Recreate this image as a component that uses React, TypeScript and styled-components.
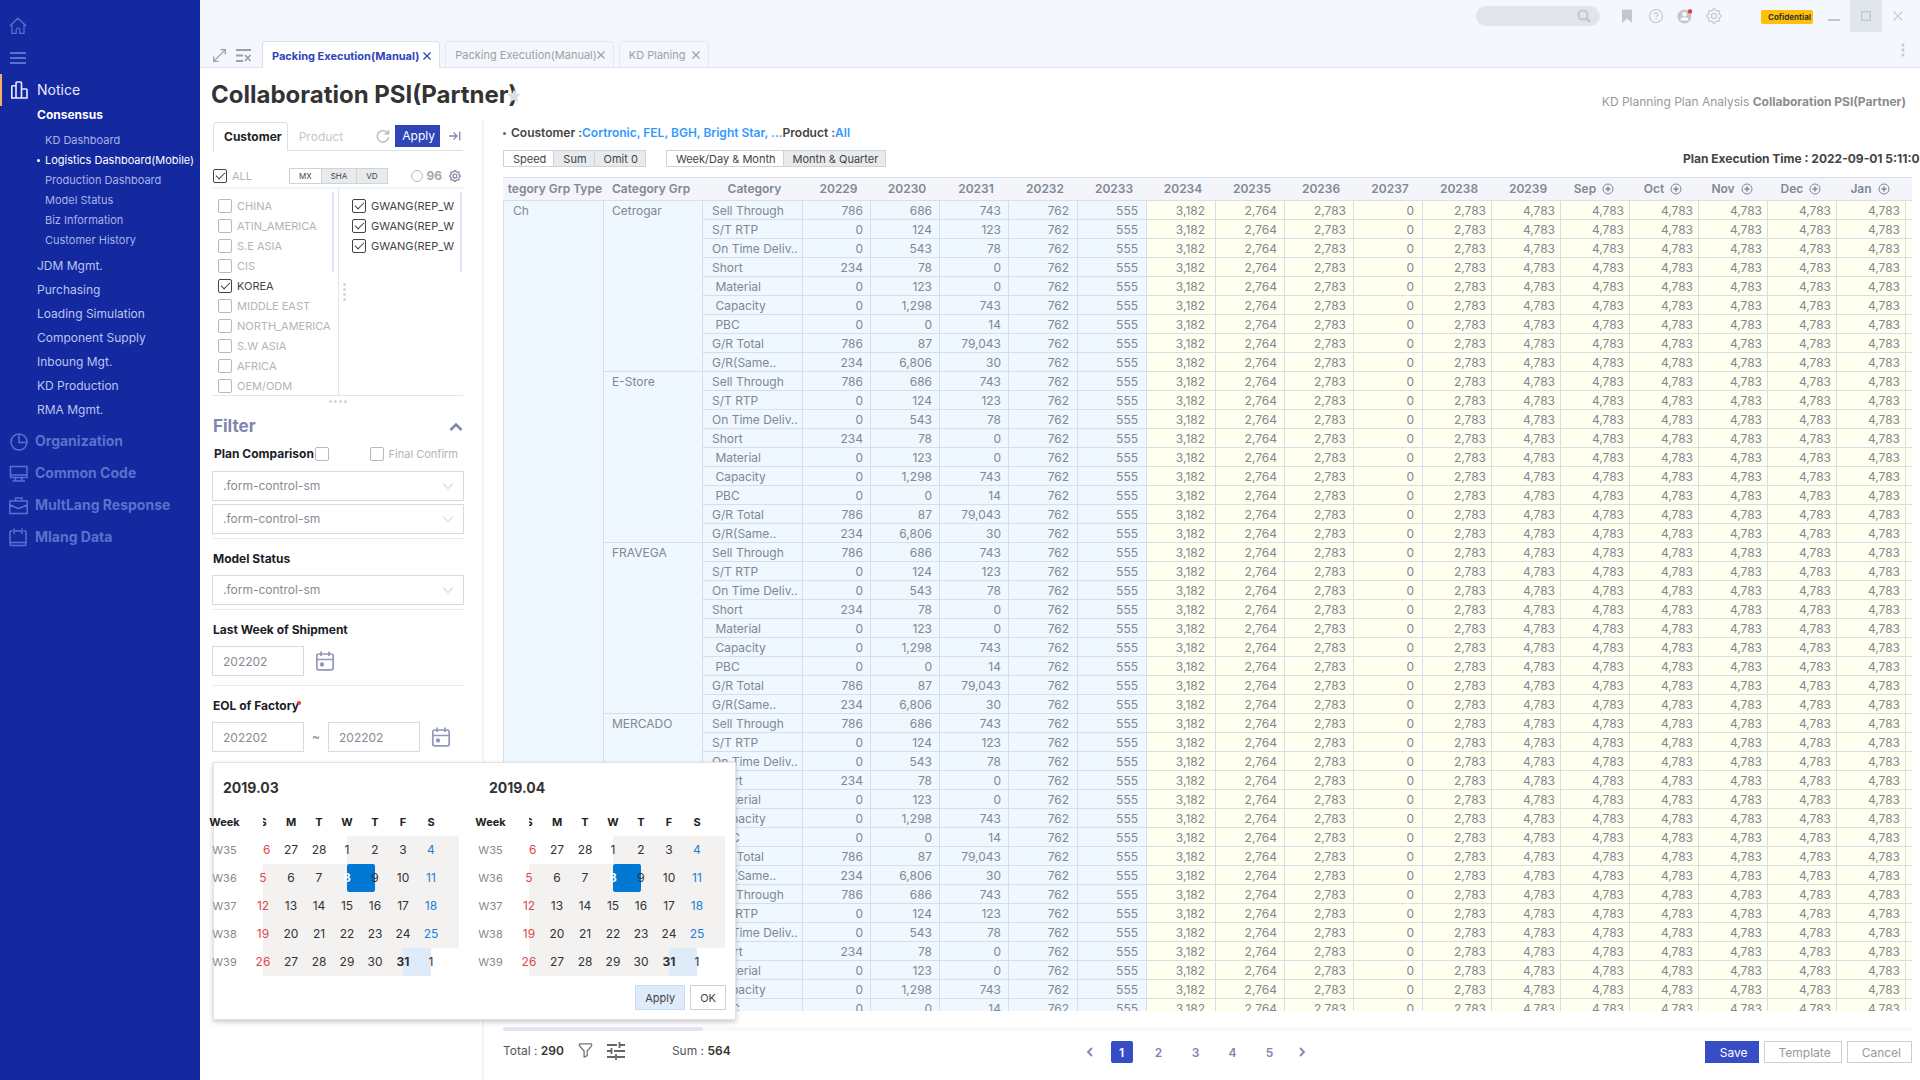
import React from "react";
import styled, { createGlobalStyle, css } from "styled-components";

const GlobalStyle = createGlobalStyle`
  *, *::before, *::after { box-sizing: border-box; }
  html, body { margin: 0; background: #fff; }
  body, button, input, select, table {
    font-family: Inter, "Liberation Sans", sans-serif;
    font-size: 12px;
    line-height: 16px;
  }
  button { cursor: pointer; }
  ul { list-style: none; margin: 0; padding: 0; }
`;

const Shell = styled.div`
  display: grid;
  grid-template-columns: 200px minmax(0, 1fr);
  height: 100vh;
  overflow: hidden;
  color: #333;
`;

/* ---------- side navigation ---------- */

const Sidebar = styled.nav`
  background: #1428a0;
  padding-top: 10px;
`;

const NavIconButton = styled.button`
  display: flex;
  align-items: center;
  width: 100%;
  height: 32px;
  padding: 0 0 0 9px;
  border: 0;
  background: none;
  color: #5a72cd;
`;

const ActiveSection = styled.a`
  display: flex;
  align-items: center;
  gap: 9px;
  height: 32px;
  padding-left: 8px;
  border-left: 2px solid #f0b267;
  color: #e6ebff;
  font-size: 14px;
  text-decoration: none;
`;

const GroupLink = styled.a`
  display: block;
  padding: 1px 0 1px 37px;
  color: #fff;
  font-weight: 700;
  text-decoration: none;
`;

const SubList = styled.ul`
  padding: 6px 0 4px;
`;

const SubLink = styled.a<{ $active?: boolean }>`
  display: flex;
  align-items: center;
  height: 20px;
  padding-left: 37px;
  font-size: 11px;
  text-decoration: none;
  white-space: nowrap;
  color: ${(p) => (p.$active ? "#fff" : "#a6b4e6")};
  &::before {
    content: "";
    width: 3px;
    height: 3px;
    margin-right: 5px;
    border-radius: 50%;
    background: ${(p) => (p.$active ? "#fff" : "transparent")};
  }
`;

const MenuLink = styled.a`
  display: flex;
  align-items: center;
  height: 24px;
  padding-left: 37px;
  color: #b9c5ee;
  text-decoration: none;
`;

const SectionList = styled.ul`
  padding-top: 3px;
`;

const SectionLink = styled.a`
  display: flex;
  align-items: center;
  gap: 7px;
  height: 32px;
  padding-left: 9px;
  color: #5a72cd;
  font-size: 14px;
  font-weight: 700;
  text-decoration: none;
`;

/* ---------- window header ---------- */

const Page = styled.div`
  position: relative;
  display: flex;
  flex-direction: column;
  min-width: 0;
  min-height: 0;
`;

const Header = styled.header`
  background: #f4f7fd;
`;

const TitleBar = styled.div`
  display: flex;
  align-items: center;
  justify-content: flex-end;
  height: 32px;
  color: #c2c8cd;
`;

const SearchBox = styled.label`
  display: flex;
  align-items: center;
  width: 124px;
  height: 20px;
  margin-right: 19px;
  padding: 0 9px 0 10px;
  border-radius: 10px;
  background: #e1e6ea;
`;

const SearchInput = styled.input`
  flex: 1;
  min-width: 0;
  border: 0;
  outline: 0;
  padding: 0;
  background: transparent;
`;

const Tools = styled.div`
  display: flex;
  align-items: center;
  gap: 13px;
`;

const PlainButton = styled.button`
  display: inline-flex;
  align-items: center;
  justify-content: center;
  padding: 0;
  border: 0;
  background: none;
  color: inherit;
`;

const Confidential = styled.span`
  margin: 1px 5px 0 39px;
  padding: 0 2px 0 7px;
  border-radius: 2px;
  background: #ffc107;
  color: #333;
  font-size: 8px;
  font-weight: 700;
  line-height: 14px;
`;

const WindowButton = styled.button<{ $active?: boolean }>`
  display: flex;
  align-items: center;
  justify-content: center;
  width: 32px;
  height: 32px;
  padding: 0;
  border: 0;
  background: ${(p) => (p.$active ? "#e1e6ea" : "transparent")};
  color: #c2c8cd;
`;

const WindowButtons = styled.div`
  display: flex;
  padding-right: 6px;
`;

const TabBar = styled.div`
  display: flex;
  align-items: flex-end;
  height: 36px;
  padding: 0 10px 0 12px;
  border-bottom: 1px solid #e1e4f0;
  color: #a0a0a0;
`;

const TabTools = styled.div`
  display: flex;
  align-items: center;
  gap: 8px;
  width: 50px;
  height: 26px;
  padding-top: 3px;
`;

const PageTabs = styled.div`
  display: flex;
  align-items: flex-end;
  flex: 1;
  gap: 5px;
`;

const PageTab = styled.div<{ $active?: boolean; $gap?: number }>`
  display: flex;
  align-items: center;
  gap: ${(p) => p.$gap ?? 4}px;
  height: 26px;
  padding: 1px 8px 0 9px;
  border: 1px solid #e4e7ef;
  border-bottom: 0;
  border-radius: 4px 4px 0 0;
  color: #a0a0a0;
  white-space: nowrap;
  ${(p) =>
    p.$active &&
    css`
      height: 27px;
      margin-bottom: -1px;
      background: #fff;
      border-color: #dcdfea;
      color: #2f45b8;
      font-weight: 700;
    `}
`;

const TabButton = styled.button`
  padding: 0;
  border: 0;
  background: none;
  color: inherit;
  font-size: 11px;
  font-weight: inherit;
`;

const MoreButton = styled(PlainButton)`
  align-self: center;
  color: #c2c8cd;
`;

const TitleRow = styled.div`
  display: flex;
  align-items: flex-start;
  justify-content: space-between;
  height: 52px;
  padding: 12px 14px 0 11px;
`;

const Title = styled.h1`
  position: relative;
  margin: 0;
  font-size: 24px;
  line-height: 30px;
  font-weight: 700;
  color: #333;
`;

const Favorite = styled.button`
  position: absolute;
  top: 9px;
  right: -3px;
  padding: 0;
  border: 0;
  background: none;
  line-height: 0;
`;

const Crumbs = styled.p`
  margin: 14px 0 0;
  color: #999;
  strong {
    font-weight: 700;
    color: #8c8c8c;
  }
`;

const Body = styled.div`
  display: flex;
  flex: 1;
  min-height: 0;
`;

/* ---------- filter panel ---------- */

const Panel = styled.aside`
  flex: none;
  width: 284px;
  padding: 2px 19px 0 13px;
  border-right: 2px solid #f3f4f7;
`;

const PanelTabs = styled.div`
  display: flex;
  height: 29px;
  border-bottom: 1px solid #dcdfea;
`;

const PanelTab = styled.button<{ $active?: boolean }>`
  padding: 0 5px 0 10px;
  border: 1px solid transparent;
  border-bottom: 0;
  border-radius: 4px 4px 0 0;
  background: transparent;
  color: #c2c8cd;
  ${(p) =>
    p.$active &&
    css`
      margin-bottom: -1px;
      border-color: #dcdfea;
      background: #fff;
      color: #222;
      font-weight: 700;
    `}
`;

const PanelActions = styled.div`
  display: flex;
  align-items: center;
  gap: 5px;
  margin-left: auto;
  padding-right: 2px;
  color: #8087ae;
`;

const ApplyButton = styled.button`
  height: 22px;
  margin-right: 4px;
  padding: 0 5px 0 7px;
  border: 0;
  background: #2f45b8;
  color: #fff;
`;

const AllRow = styled.div`
  display: flex;
  align-items: center;
  height: 38px;
  padding: 14px 2px 0 0;
  border-bottom: 2px solid #f2f3f5;
`;

const CheckLabel = styled.label<{ $dark?: boolean }>`
  display: flex;
  align-items: center;
  gap: 5px;
  height: 20px;
  font-size: 11px;
  white-space: nowrap;
  color: ${(p) => (p.$dark ? "#444" : "#b4b4b4")};
`;

const Check = styled.input.attrs({ type: "checkbox" })`
  appearance: none;
  flex: none;
  display: grid;
  place-items: center;
  width: 14px;
  height: 14px;
  margin: 0;
  border: 1px solid #b8b8b8;
  border-radius: 2px;
  background: #fff;
  &:checked {
    border-color: #444;
  }
  &:checked::after {
    content: "";
    width: 9px;
    height: 5px;
    margin-top: -3px;
    border: solid #444;
    border-width: 0 0 1px 1px;
    transform: rotate(-45deg);
  }
`;

const Segments = styled.div`
  display: flex;
`;

const OwnerSegments = styled(Segments)`
  margin-left: 37px;
`;

const Segment = styled.button<{ $active?: boolean; $small?: boolean }>`
  height: ${(p) => (p.$small ? 16 : 17)}px;
  padding: ${(p) => (p.$small ? "0 9px" : "0 7px 0 9px")};
  border: 1px solid #cfd3d8;
  background: ${(p) => (p.$active ? "#fff" : "#e7ebee")};
  color: #444;
  font-size: ${(p) => (p.$small ? 8 : 11)}px;
  line-height: 14px;
  white-space: nowrap;
  & + & {
    margin-left: -1px;
  }
`;

const CountLabel = styled.label`
  display: flex;
  align-items: center;
  gap: 3px;
  margin-left: auto;
  margin-right: 7px;
  color: #a8a8a8;
  font-weight: 700;
`;

const Radio = styled.input.attrs({ type: "radio" })`
  appearance: none;
  width: 12px;
  height: 12px;
  margin: 0;
  border: 1px solid #b8b8b8;
  border-radius: 50%;
`;

const Lists = styled.div`
  display: grid;
  grid-template-columns: 1fr 1fr;
  height: 207px;
  border-bottom: 1px solid #e3e5e9;
`;

const ListColumn = styled.div<{ $left: number; $right?: number }>`
  display: flex;
  min-width: 0;
  padding-left: ${(p) => p.$left}px;
  padding-right: ${(p) => p.$right ?? 0}px;
  & + & {
    border-left: 1px solid #e3e5ee;
  }
`;

const ListItems = styled.ul`
  flex: 1;
  min-width: 0;
  padding-top: 7px;
`;

const ScrollMark = styled.div`
  flex: none;
  width: 2px;
  height: 80px;
  margin-top: 3px;
  background: #e1e5f5;
`;

const DragColumn = styled.div`
  display: flex;
  flex: none;
  align-items: flex-start;
  width: 9px;
  padding-top: 94px;
`;

const Dots = styled.div<{ $vertical?: boolean }>`
  display: flex;
  flex-direction: ${(p) => (p.$vertical ? "column" : "row")};
  justify-content: center;
  gap: 2px;
  i {
    width: 3px;
    height: 3px;
    border-radius: 50%;
    background: #d3d5da;
  }
`;

const DragRow = styled.div`
  height: 17px;
  padding-top: 4px;
`;

const FilterHead = styled.div`
  display: flex;
  align-items: center;
  justify-content: space-between;
  height: 27px;
  h2 {
    margin: 0;
    font-size: 17px;
    line-height: 27px;
    font-weight: 700;
    color: #8087ae;
  }
`;

const CompareRow = styled.div`
  display: flex;
  align-items: center;
  justify-content: space-between;
  height: 28px;
  margin-bottom: 3px;
  padding: 0 5px 0 1px;
`;

const CompareLabel = styled.label`
  display: flex;
  align-items: center;
  gap: 1px;
  font-weight: 700;
  color: #1c1c28;
`;

const FieldBlock = styled.section<{ $bottom: number }>`
  padding-bottom: ${(p) => p.$bottom}px;
  border-bottom: 1px solid #e6e8f2;
`;

const FieldLabel = styled.label`
  position: relative;
  display: block;
  width: fit-content;
  padding: 12px 0 8px;
  font-weight: 700;
  color: #1c1c28;
`;

const RequiredDot = styled.span`
  position: absolute;
  top: 15px;
  right: -2px;
  width: 4px;
  height: 4px;
  border-radius: 50%;
  background: #e53935;
`;

const SelectWrap = styled.div`
  display: grid;
  align-items: center;
  margin: 0 -1px 3px;
  select,
  svg {
    grid-area: 1 / 1;
  }
  svg {
    justify-self: end;
    margin-right: 10px;
    pointer-events: none;
  }
`;

const Select = styled.select`
  appearance: none;
  width: 100%;
  height: 30px;
  padding: 0 10px;
  border: 1px solid #d9dbe0;
  border-radius: 0;
  background: #fff;
  color: #868c94;
`;

const WeekRow = styled.div`
  display: flex;
  align-items: center;
  gap: 11px;
  margin-left: -1px;
`;

const WeekInput = styled.input`
  width: 92px;
  height: 30px;
  padding: 0 10px;
  border: 1px solid #d9dbe0;
  background: #fff;
  color: #868c94;
`;

const WeekRange = styled.div`
  display: grid;
  grid-template-columns: 92px 24px 92px;
  align-items: center;
  text-align: center;
  color: #868c94;
`;

/* ---------- grid area ---------- */

const Content = styled.main`
  display: flex;
  flex: 1;
  flex-direction: column;
  min-width: 0;
  padding: 0 8px 17px 19px;
`;

const Summary = styled.p`
  display: flex;
  align-items: center;
  height: 26px;
  margin: 0 0 4px;
  font-weight: 600;
  color: #444;
  white-space: nowrap;
  &::before {
    content: "";
    width: 3px;
    height: 3px;
    margin-right: 5px;
    border-radius: 50%;
    background: #666;
  }
  b {
    font-weight: 600;
    color: #3399ff;
  }
`;

const ViewRow = styled.div`
  display: flex;
  gap: 20px;
  align-items: flex-start;
  height: 27px;
`;

const ExecutionTime = styled.p`
  width: 229px;
  margin: 1px 0 0 auto;
  font-weight: 700;
  color: #444;
  white-space: nowrap;
`;

const GridWrap = styled.div`
  flex: 1;
  min-height: 0;
  overflow: hidden;
`;

const Grid = styled.table`
  table-layout: fixed;
  border-collapse: separate;
  border-spacing: 0;
  width: 100%;
  min-width: 1409px;
  color: #808892;
`;

const headPadding = {
  right: "0 1px 0 0",
  left: "0 0 0 9px",
  middle: "0 1px 0 0",
  shifted: "0 0 0 5px",
};

const HeadCell = styled.th<{ $align?: keyof typeof headPadding }>`
  height: 24px;
  padding: ${(p) => headPadding[p.$align ?? "shifted"]};
  border-top: 1px solid #dcdee6;
  border-bottom: 1px solid #dcdee6;
  background: #f4f5fa;
  font-weight: 600;
  text-align: ${(p) => (p.$align === "left" || p.$align === "right" ? p.$align : "center")};
  white-space: nowrap;
`;

const MonthHead = styled.span`
  display: flex;
  align-items: center;
  justify-content: center;
  gap: 6px;
`;

const Cell = styled.td<{ $frozen?: boolean; $indent?: number; $pad?: number }>`
  height: 19px;
  padding: 2px ${(p) => p.$pad ?? 0}px 0 ${(p) => p.$indent ?? 0}px;
  border-left: 1px solid #d9dde6;
  border-bottom: 1px solid #d9dde6;
  background: ${(p) => (p.$frozen ? "#eff7ff" : "#fffff0")};
  text-align: ${(p) => (p.$indent ? "left" : "right")};
  vertical-align: top;
  line-height: 16px;
  white-space: pre;
`;

const ScrollTrack = styled.div`
  height: 4px;
  margin: 16px 0 10px;
  border-radius: 2px;
  background: #f8f8fa;
`;

const ScrollThumb = styled.div`
  width: 200px;
  height: 4px;
  border-radius: 2px;
  background: #e2e3f3;
`;

const Footer = styled.footer`
  display: grid;
  grid-template-columns: 1fr auto 1fr;
  align-items: center;
  height: 22px;
`;

const Totals = styled.div`
  display: flex;
  align-items: center;
  gap: 14px;
  padding-bottom: 3px;
  color: #555;
  strong {
    font-weight: 600;
    color: #333;
  }
`;

const SumText = styled.span`
  margin-left: 33px;
`;

const Pagination = styled.div`
  display: flex;
  align-items: center;
  gap: 15px;
  margin-right: 24px;
  color: #8087ae;
`;

const PageNumber = styled.button<{ $active?: boolean }>`
  width: 22px;
  height: 22px;
  padding: 1px 0 0;
  border: 0;
  border-radius: 2px;
  background: ${(p) => (p.$active ? "#374dc6" : "transparent")};
  color: ${(p) => (p.$active ? "#fff" : "#8087ae")};
  font-weight: 600;
`;

const FooterActions = styled.div`
  display: flex;
  justify-content: flex-end;
  gap: 5px;
`;

const ActionButton = styled.button<{ $primary?: boolean }>`
  height: 22px;
  padding: 1px 10px 0 14px;
  border: 1px solid ${(p) => (p.$primary ? "#374dc6" : "#cfcfcf")};
  background: ${(p) => (p.$primary ? "#374dc6" : "#fff")};
  color: ${(p) => (p.$primary ? "#fff" : "#999")};
`;

/* ---------- week picker ---------- */

const Picker = styled.div`
  position: absolute;
  top: 762px;
  left: 13px;
  width: 523px;
  padding: 15px 9px 9px;
  border: 1px solid #e3e3e3;
  background: #fff;
  box-shadow: 0 2px 5px rgba(0, 0, 0, 0.22);
`;

const Months = styled.div`
  display: grid;
  grid-template-columns: 266px 1fr;
`;

const MonthName = styled.h3`
  margin: 0 0 10px;
  font-size: 14px;
  line-height: 20px;
  font-weight: 700;
  color: #333;
`;

const MonthTable = styled.table`
  table-layout: fixed;
  width: 250px;
  margin-left: -14px;
  border-collapse: collapse;
`;

const dayTone = {
  none: "transparent",
  range: "#f3f2f1",
  picked: "#0078d4",
  soft: "#deebf9",
};

const WeekCell = styled.th<{ $head?: boolean }>`
  width: 54px;
  padding: 0 23px 0 0;
  font-size: 11px;
  font-weight: ${(p) => (p.$head ? 700 : 400)};
  color: ${(p) => (p.$head ? "#222" : "#888")};
`;

const DayCell = styled.td<{ $tone: keyof typeof dayTone; $clip?: boolean }>`
  width: 28px;
  height: 28px;
  padding: 0;
  border-radius: ${(p) => (p.$tone === "picked" ? 2 : 0)}px;
  background: ${(p) => dayTone[p.$tone]};
  overflow: ${(p) => (p.$clip ? "hidden" : "visible")};
`;

const Day = styled.span<{ $color: string; $bold?: boolean; $head?: boolean }>`
  display: block;
  width: 28px;
  margin-left: -14px;
  text-align: center;
  color: ${(p) => p.$color};
  font-size: ${(p) => (p.$head ? 11 : 12)}px;
  font-weight: ${(p) => (p.$bold ? 700 : 400)};
`;

const PickerActions = styled.div`
  display: flex;
  justify-content: flex-end;
  gap: 5px;
  padding-top: 9px;
`;

const PickerButton = styled.button<{ $tinted?: boolean }>`
  height: 25px;
  padding: 0 9px;
  border: 1px solid ${(p) => (p.$tinted ? "#c9dcef" : "#cfcfcf")};
  background: ${(p) => (p.$tinted ? "#deebf9" : "#fff")};
  color: #444;
  font-size: 11px;
`;

/* ---------- icons ---------- */

type IconProps = { size?: number; children: React.ReactNode; width?: number; box?: string; color?: string };

const Icon = ({ size = 16, width = 1.2, box = "0 0 16 16", color = "currentColor", children }: IconProps) => (
  <svg width={size} height={size} viewBox={box} fill="none" stroke={color} strokeWidth={width} aria-hidden="true">
    {children}
  </svg>
);

const HomeIcon = () => (
  <Icon size={18} box="0 0 18 18">
    <path d="M.8 9 9 1.2 17.2 9M3 7.500V16.400H7.200V12.200Q7.200 11 9 11Q10.800 11 10.800 12.200V16.400H15V7.500" />
  </Icon>
);
const MenuIcon = () => (
  <Icon size={18} box="0 0 18 18" width={1.8}>
    <path d="M1 4H17M1 9H17M1 14H17" />
  </Icon>
);
const ChartIcon = () => (
  <Icon size={18} box="0 0 18 18" width={1.6}>
    <path d="M6 17H1.800V5.500Q1.800 4.800 2.500 4.800H6M6 17V2Q6 1 7 1H10.500Q11.500 1 11.500 2V17H6M11.500 8H16.200Q17 8 17 8.800V17H11.500" />
  </Icon>
);
const PieIcon = () => (
  <Icon size={19} box="0 0 19 19" width={1.5}>
    <circle cx="10" cy="10" r="8" />
    <path d="M10 2V10.500H18" />
  </Icon>
);
const ScreenIcon = () => (
  <Icon size={19} box="0 0 19 19" width={1.5}>
    <path d="M1.500 2.500H18V13.500H1.500ZM1.500 11H18M6.500 13.500V17M13 13.500V17M3.500 17H16" />
  </Icon>
);
const CaseIcon = () => (
  <Icon size={19} box="0 0 19 19" width={1.5}>
    <path d="M.8 5H18.200V17.500H.8ZM6.500 5V2H13V5M1 9 8 12Q9.500 12.800 11 12L18 9" />
  </Icon>
);
const PadIcon = () => (
  <Icon size={19} box="0 0 19 19" width={1.5}>
    <path d="M3.500 3H1.800Q1 3 1 4V16.500Q1 17.500 2 17.500H16Q17 17.500 17 16.500V4Q17 3 16.200 3H14.500M6 3H12M5 .5V6M13 .5V6M1 14.500H17" />
  </Icon>
);
const SearchIcon = () => (
  <Icon size={14} box="0 0 14 14" width={2} color="#c2c8cd">
    <circle cx="6" cy="6" r="4.600" />
    <path d="M9.500 9.500 13 13" strokeWidth={2.600} />
  </Icon>
);
const gearPath = (() => {
  const teeth = 8;
  let d = "";
  for (let i = 0; i < teeth * 4; i++) {
    const angle = ((i - 0.5) / (teeth * 4)) * Math.PI * 2;
    const r = i % 4 < 2 ? 7.2 : 5.7;
    d += (i ? "L" : "M") + (8 + r * Math.cos(angle)).toFixed(2) + " " + (8 + r * Math.sin(angle)).toFixed(2);
  }
  return d + "Z";
})();
const GearIcon = ({ size = 16, color }: { size?: number; color?: string }) => (
  <Icon size={size} width={size > 14 ? 1.1 : 1.6} color={color}>
    <path d={gearPath} strokeLinejoin="round" />
    <circle cx="8" cy="8" r="2.600" />
  </Icon>
);
const CloseIcon = ({ size = 8 }: { size?: number }) => (
  <Icon size={size} box="0 0 10 10" width={size > 8 ? 1.2 : 1.6}>
    <path d="M.6.6 9.400 9.400M9.400.6.6 9.400" />
  </Icon>
);
const CalendarIcon = () => (
  <Icon size={20} box="0 0 20 20" width={1.7} color="#9297bb">
    <rect x="1.800" y="3" width="16.400" height="15.800" rx="2" />
    <path d="M2 8.500H18M6 .5V5M14 .5V5" />
    <circle cx="7" cy="13.500" r="1.300" fill="#8087ae" />
  </Icon>
);
const PlusCircle = () => (
  <Icon size={12} box="0 0 12 12" width={1}>
    <circle cx="6" cy="6" r="5" />
    <path d="M6 3.500V8.500M3.500 6H8.500" strokeWidth={1.500} />
  </Icon>
);
const ChevronDown = () => (
  <Icon size={12} box="0 0 12 12" width={1.6} color="#dfe2f0">
    <path d="M1 3.500 6 8.500 11 3.500" />
  </Icon>
);

/* ---------- data ---------- */

const dashboards = [
  "KD Dashboard",
  "Logistics Dashboard(Mobile)",
  "Production Dashboard",
  "Model Status",
  "Biz Information",
  "Customer History",
];
const menus = [
  "JDM Mgmt.",
  "Purchasing",
  "Loading Simulation",
  "Component Supply",
  "Inboung Mgt.",
  "KD Production",
  "RMA Mgmt.",
];
const sections = [
  { name: "Organization", icon: <PieIcon /> },
  { name: "Common Code", icon: <ScreenIcon /> },
  { name: "MultLang Response", icon: <CaseIcon /> },
  { name: "Mlang Data", icon: <PadIcon /> },
];
const pageTabs = [
  { name: "Packing Execution(Manual)", gap: 4 },
  { name: "Packing Execution(Manual)", gap: 0 },
  { name: "KD Planing", gap: 7 },
];
const regions = [
  "CHINA",
  "ATIN_AMERICA",
  "S.E ASIA",
  "CIS",
  "KOREA",
  "MIDDLE EAST",
  "NORTH_AMERICA",
  "S.W ASIA",
  "AFRICA",
  "OEM/ODM",
];

const weeks = ["20229", "20230", "20231", "20232", "20233", "20234", "20235", "20236", "20237", "20238", "20239"];
const months = ["Sep", "Oct", "Nov", "Dec", "Jan"];
const groups = ["Cetrogar", "E-Store", "FRAVEGA", "MERCADO", ""];
const measures: [string, string, string, string][] = [
  ["Sell Through", "786", "686", "743"],
  ["S/T RTP", "0", "124", "123"],
  ["On Time Deliv..", "0", "543", "78"],
  ["Short", "234", "78", "0"],
  [" Material", "0", "123", "0"],
  [" Capacity", "0", "1,298", "743"],
  [" PBC", "0", "0", "14"],
  ["G/R Total", "786", "87", "79,043"],
  ["G/R(Same..", "234", "6,806", "30"],
];
const shared = ["762", "555", "3,182", "2,764", "2,783", "0", "2,783", "4,783", "4,783", "4,783", "4,783", "4,783", "4,783"];
const columnWidths = [100, 99, 100, 68, ...Array(15).fill(69)];
const columnPads = [7, 7, 7, 8, 8, 10, 7, 7, 8, 5, 5, 5, 5, 5, 5, 5];
const frozenValues = 5;
const visibleRows = 43;

const calendar = [
  ["W35", "26", "27", "28", "1", "2", "3", "4"],
  ["W36", "5", "6", "7", "8", "9", "10", "11"],
  ["W37", "12", "13", "14", "15", "16", "17", "18"],
  ["W38", "19", "20", "21", "22", "23", "24", "25"],
  ["W39", "26", "27", "28", "29", "30", "31", "1"],
];

const toneOf = (row: number, col: number): keyof typeof dayTone => {
  if (row === 0 && col < 3) return "none";
  if (row === 1 && col === 3) return "picked";
  if (row === 4 && col === 5) return "soft";
  if (row === 4 && col === 6) return "none";
  return "range";
};
const colorOf = (row: number, col: number) => {
  if (row === 1 && col === 3) return "#fff";
  if (col === 0) return "#e0484d";
  if (col === 6 && row < 4) return "#1a80d8";
  return "#333";
};

const Month = ({ name }: { name: string }) => (
  <div>
    <MonthName>{name}</MonthName>
    <MonthTable>
      <thead>
        <tr>
          <WeekCell $head scope="col">
            Week
          </WeekCell>
          {["S", "M", "T", "W", "T", "F", "S"].map((d, i) => (
            <DayCell as="th" key={i} $tone="none" $clip={i === 0}>
              <Day $head $bold $color="#222">
                {d}
              </Day>
            </DayCell>
          ))}
        </tr>
      </thead>
      <tbody>
        {calendar.map(([week, ...days], row) => (
          <tr key={week}>
            <WeekCell scope="row">{week}</WeekCell>
            {days.map((day, col) => (
              <DayCell key={col} $tone={toneOf(row, col)} $clip={row === 0 && col === 0}>
                <Day $color={colorOf(row, col)} $bold={day === "8" || day === "31"}>
                  {day}
                </Day>
              </DayCell>
            ))}
          </tr>
        ))}
      </tbody>
    </MonthTable>
  </div>
);

const FormSelect = ({ id, label }: { id: string; label?: string }) => (
  <SelectWrap>
    <Select id={id} aria-label={label}>
      <option>.form-control-sm</option>
    </Select>
    <ChevronDown />
  </SelectWrap>
);

const DragDots = ({ vertical }: { vertical?: boolean }) => (
  <Dots $vertical={vertical}>
    <i />
    <i />
    <i />
    <i />
  </Dots>
);

const PsiGrid = () => (
  <Grid>
    <colgroup>
      {columnWidths.map((w, i) => (
        <col key={i} style={{ width: w }} />
      ))}
      <col />
    </colgroup>
    <thead>
      <tr>
        <HeadCell $align="right">tegory Grp Type</HeadCell>
        <HeadCell $align="left">Category Grp</HeadCell>
        <HeadCell>Category</HeadCell>
        {weeks.map((w) => (
          <HeadCell key={w}>{w}</HeadCell>
        ))}
        {months.map((m) => (
          <HeadCell key={m} $align="middle">
            <MonthHead>
              {m}
              <PlusCircle />
            </MonthHead>
          </HeadCell>
        ))}
        <HeadCell $align="middle" />
      </tr>
    </thead>
    <tbody>
      {Array.from({ length: visibleRows }, (_, i) => {
        const [label, ...own] = measures[i % 9];
        return (
          <tr key={i}>
            {i === 0 && (
              <Cell $frozen $indent={9} rowSpan={visibleRows}>
                Ch
              </Cell>
            )}
            {i % 9 === 0 && (
              <Cell $frozen $indent={8} rowSpan={Math.min(9, visibleRows - i)}>
                {groups[i / 9]}
              </Cell>
            )}
            <Cell $frozen $indent={9}>
              {label}
            </Cell>
            {[...own, ...shared].map((v, c) => (
              <Cell key={c} $frozen={c < frozenValues} $pad={columnPads[c]}>
                {v}
              </Cell>
            ))}
            <Cell />
          </tr>
        );
      })}
    </tbody>
  </Grid>
);

const SideNav = () => (
  <Sidebar>
    <NavIconButton aria-label="Home">
      <HomeIcon />
    </NavIconButton>
    <NavIconButton aria-label="Menu">
      <MenuIcon />
    </NavIconButton>
    <ActiveSection href="#notice">
      <ChartIcon />
      Notice
    </ActiveSection>
    <GroupLink href="#consensus">Consensus</GroupLink>
    <SubList>
      {dashboards.map((d, i) => (
        <li key={d}>
          <SubLink href="#dashboard" $active={i === 1}>
            {d}
          </SubLink>
        </li>
      ))}
    </SubList>
    <ul>
      {menus.map((m) => (
        <li key={m}>
          <MenuLink href="#menu">{m}</MenuLink>
        </li>
      ))}
    </ul>
    <SectionList>
      {sections.map((s) => (
        <li key={s.name}>
          <SectionLink href="#section">
            {s.icon}
            {s.name}
          </SectionLink>
        </li>
      ))}
    </SectionList>
  </Sidebar>
);

const WindowHeader = () => (
  <Header>
    <TitleBar>
      <SearchBox>
        <SearchInput type="search" aria-label="Search" />
        <SearchIcon />
      </SearchBox>
      <Tools>
        <PlainButton aria-label="Bookmarks">
          <Icon>
            <path d="M3 1.500H13V15L8 10.500 3 15Z" fill="currentColor" stroke="none" />
          </Icon>
        </PlainButton>
        <PlainButton aria-label="Help">
          <Icon>
            <circle cx="8" cy="8" r="6.500" />
            <path d="M6 6.500Q6.200 4.800 8 4.800Q10 4.800 10 6.400Q10 7.400 8.700 8Q8 8.400 8 9.200M8 10.300V11.600" />
          </Icon>
        </PlainButton>
        <PlainButton aria-label="Account">
          <Icon>
            <circle cx="7.500" cy="8.500" r="7" fill="currentColor" stroke="none" />
            <circle cx="7.500" cy="6.300" r="2.200" fill="#fff" stroke="none" />
            <path d="M3.500 12.500Q3.500 9.200 7.500 9.200Q11.500 9.200 11.500 12.500Z" fill="#fff" stroke="none" />
            <circle cx="13" cy="3.500" r="2.200" fill="#e53935" stroke="none" />
          </Icon>
        </PlainButton>
        <PlainButton aria-label="Settings">
          <GearIcon />
        </PlainButton>
      </Tools>
      <Confidential>Cofidential</Confidential>
      <WindowButtons>
        <WindowButton aria-label="Minimize">
          <Icon size={12} box="0 0 12 12" width={2}>
            <path d="M0 10H12" />
          </Icon>
        </WindowButton>
        <WindowButton aria-label="Maximize" $active>
          <Icon size={10} box="0 0 10 10" width={1.4}>
            <rect x=".7" y=".7" width="8.600" height="8.600" />
          </Icon>
        </WindowButton>
        <WindowButton aria-label="Close">
          <CloseIcon size={10} />
        </WindowButton>
      </WindowButtons>
    </TitleBar>
    <TabBar>
      <TabTools>
        <PlainButton aria-label="Expand">
          <Icon size={15} width={1.4}>
            <path d="M2.500 13.500 13.500 2.500M9 1.800H14.200V7M1.800 9V14.200H7" />
          </Icon>
        </PlainButton>
        <PlainButton aria-label="Close all tabs">
          <Icon size={17} box="0 0 17 14" width={1.8}>
            <path d="M1 1.500H16M1 7H8M1 12.500H8M10 6.500 15.500 12.500M15.500 6.500 10 12.500" />
          </Icon>
        </PlainButton>
      </TabTools>
      <PageTabs>
        {pageTabs.map((t, i) => (
          <PageTab key={i} $active={i === 0} $gap={t.gap}>
            <TabButton>{t.name}</TabButton>
            <PlainButton aria-label={"Close " + t.name}>
              <CloseIcon />
            </PlainButton>
          </PageTab>
        ))}
      </PageTabs>
      <MoreButton aria-label="More">
        <Icon size={14} box="0 0 14 14">
          <g fill="currentColor" stroke="none">
            <circle cx="7" cy="2" r="1.500" />
            <circle cx="7" cy="7" r="1.500" />
            <circle cx="7" cy="12" r="1.500" />
          </g>
        </Icon>
      </MoreButton>
    </TabBar>
  </Header>
);

const FilterPanel = () => (
  <Panel>
    <PanelTabs>
      <PanelTab $active>Customer</PanelTab>
      <PanelTab>Product</PanelTab>
      <PanelActions>
        <PlainButton aria-label="Reset">
          <Icon size={14} width={1.6} color="#b8b8b8">
            <path d="M13.600 5A6.500 6.500 0 1 0 14.500 9M14.300 1V5.500H9.800" />
          </Icon>
        </PlainButton>
        <ApplyButton>Apply</ApplyButton>
        <PlainButton aria-label="Collapse panel">
          <Icon size={12} box="0 0 12 12" width={1.3}>
            <path d="M0 6H8M4.500 2.500 8 6 4.500 9.500M10.800 1.500V10.500" />
          </Icon>
        </PlainButton>
      </PanelActions>
    </PanelTabs>
    <AllRow>
      <CheckLabel>
        <Check defaultChecked />
        ALL
      </CheckLabel>
      <OwnerSegments>
        <Segment $small $active>
          MX
        </Segment>
        <Segment $small>SHA</Segment>
        <Segment $small>VD</Segment>
      </OwnerSegments>
      <CountLabel>
        <Radio name="count" />
        96
      </CountLabel>
      <PlainButton aria-label="List settings">
        <GearIcon size={12} color="#8087ae" />
      </PlainButton>
    </AllRow>
    <Lists>
      <ListColumn $left={5} $right={4}>
        <ListItems>
          {regions.map((r) => (
            <li key={r}>
              <CheckLabel $dark={r === "KOREA"}>
                <Check defaultChecked={r === "KOREA"} />
                {r}
              </CheckLabel>
            </li>
          ))}
        </ListItems>
        <ScrollMark />
      </ListColumn>
      <ListColumn $left={4} $right={1}>
        <DragColumn>
          <DragDots vertical />
        </DragColumn>
        <ListItems>
          {[0, 1, 2].map((i) => (
            <li key={i}>
              <CheckLabel $dark>
                <Check defaultChecked />
                GWANG(REP_W
              </CheckLabel>
            </li>
          ))}
        </ListItems>
        <ScrollMark />
      </ListColumn>
    </Lists>
    <DragRow>
      <DragDots />
    </DragRow>
    <FilterHead>
      <h2>Filter</h2>
      <PlainButton aria-label="Collapse filter">
        <Icon size={14} box="0 0 14 14" width={2.6} color="#8087ae">
          <path d="M1.500 10 7 4.500 12.500 10" />
        </Icon>
      </PlainButton>
    </FilterHead>
    <CompareRow>
      <CompareLabel>
        Plan Comparison
        <Check />
      </CompareLabel>
      <CheckLabel>
        <Check />
        Final Confirm
      </CheckLabel>
    </CompareRow>
    <FieldBlock $bottom={1}>
      <FormSelect id="plan-a" label="First plan" />
      <FormSelect id="plan-b" label="Second plan" />
    </FieldBlock>
    <FieldBlock $bottom={1}>
      <FieldLabel htmlFor="model-status">Model Status</FieldLabel>
      <FormSelect id="model-status" />
    </FieldBlock>
    <FieldBlock $bottom={9}>
      <FieldLabel htmlFor="last-week">Last Week of Shipment</FieldLabel>
      <WeekRow>
        <WeekInput id="last-week" defaultValue="202202" />
        <PlainButton aria-label="Choose week">
          <CalendarIcon />
        </PlainButton>
      </WeekRow>
    </FieldBlock>
    <FieldLabel htmlFor="eol-from">
      EOL of Factory
      <RequiredDot />
    </FieldLabel>
    <WeekRow>
      <WeekRange>
        <WeekInput id="eol-from" defaultValue="202202" />
        <span>~</span>
        <WeekInput aria-label="EOL of Factory, to" defaultValue="202202" />
      </WeekRange>
      <PlainButton aria-label="Choose weeks">
        <CalendarIcon />
      </PlainButton>
    </WeekRow>
  </Panel>
);

const GridFooter = () => (
  <Footer>
    <Totals>
      <span>
        Total : <strong>290</strong>
      </span>
      <PlainButton aria-label="Filter rows">
        <Icon size={15} width={1.4} color="#777">
          <path d="M1.500 1H14.500V3L9.800 8.500V13.500L6.500 15.200V8.500L1.500 3Z" strokeLinejoin="round" />
        </Icon>
      </PlainButton>
      <PlainButton aria-label="Adjust columns">
        <Icon size={18} box="0 0 18 18" width={1.8} color="#666">
          <path d="M0 3H10M12.500 3H18M12.500 0V6M0 9H4M4.500 6V12M7 9H18M0 15H8M9 12V18M10 15H18" />
        </Icon>
      </PlainButton>
      <SumText>
        Sum : <strong>564</strong>
      </SumText>
    </Totals>
    <Pagination>
      <PlainButton aria-label="Previous page">
        <Icon size={12} box="0 0 12 12" width={1.8}>
          <path d="M8 2 4 6 8 10" />
        </Icon>
      </PlainButton>
      {[1, 2, 3, 4, 5].map((n) => (
        <PageNumber key={n} $active={n === 1}>
          {n}
        </PageNumber>
      ))}
      <PlainButton aria-label="Next page">
        <Icon size={12} box="0 0 12 12" width={1.8}>
          <path d="M4 2 8 6 4 10" />
        </Icon>
      </PlainButton>
    </Pagination>
    <FooterActions>
      <ActionButton $primary>Save</ActionButton>
      <ActionButton>Template</ActionButton>
      <ActionButton>Cancel</ActionButton>
    </FooterActions>
  </Footer>
);

export default function App() {
  return (
    <>
      <GlobalStyle />
      <Shell>
        <SideNav />
        <Page>
          <WindowHeader />
          <TitleRow>
            <Title>
              Collaboration PSI(Partner)
              <Favorite aria-label="Add to favorites">
                <Icon size={14}>
                  <path
                    d="M8 .5 10.300 5.500 15.800 6.100 11.700 9.800 12.900 15.200 8 12.500 3.100 15.200 4.300 9.800.2 6.100 5.700 5.500Z"
                    fill="#dfdfdf"
                    stroke="none"
                  />
                </Icon>
              </Favorite>
            </Title>
            <Crumbs>
              KD Planning Plan Analysis <strong>Collaboration PSI(Partner)</strong>
            </Crumbs>
          </TitleRow>

          <Body>
            <FilterPanel />
            <Content>
              <Summary>
                Coustomer :<b>Cortronic, FEL, BGH, Bright Star, ...</b>Product :<b>All</b>
              </Summary>
              <ViewRow>
                <Segments>
                  <Segment $active>Speed</Segment>
                  <Segment>Sum</Segment>
                  <Segment>Omit 0</Segment>
                </Segments>
                <Segments>
                  <Segment $active>Week/Day &amp; Month</Segment>
                  <Segment>Month &amp; Quarter</Segment>
                </Segments>
                <ExecutionTime>Plan Execution Time : 2022-09-01 5:11:0</ExecutionTime>
              </ViewRow>
              <GridWrap>
                <PsiGrid />
              </GridWrap>
              <ScrollTrack>
                <ScrollThumb />
              </ScrollTrack>
              <GridFooter />
            </Content>
          </Body>

          <Picker role="dialog" aria-label="Choose weeks">
            <Months>
              <Month name="2019.03" />
              <Month name="2019.04" />
            </Months>
            <PickerActions>
              <PickerButton $tinted>Apply</PickerButton>
              <PickerButton>OK</PickerButton>
            </PickerActions>
          </Picker>
        </Page>
      </Shell>
    </>
  );
}
